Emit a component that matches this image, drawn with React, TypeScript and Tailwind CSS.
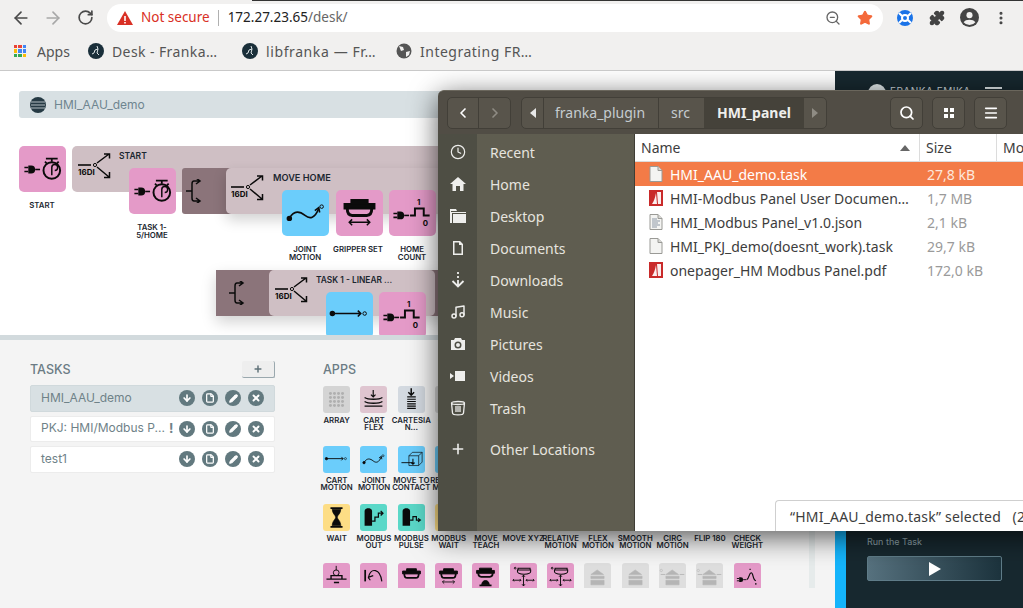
import type { ReactNode } from 'react'
import { ArrowLeft, ArrowRight, RotateCw, ZoomOut, Star, Puzzle, MoreVertical, ArrowDown, Pencil, X, Plus, Search, Menu, ChevronLeft, ChevronRight, Clock, Music, File } from 'lucide-react'

const k = '#0b0b0b'

function Plug({ x = 5, y = 24 }: { x?: number; y?: number }) {
  return (
    <g transform={`translate(${x} ${y})`} stroke={k} fill={k}>
      <path d="M0-2h4M0 2h4" strokeWidth="1.6" />
      <path d="M4-4h3a4 4 0 0 1 0 8H4z" strokeWidth="0" />
      <path d="M11 0h5" strokeWidth="1.6" />
    </g>
  )
}

const Svg = ({ children }: { children: ReactNode }) => (
  <svg viewBox="0 0 47 47" className="w-full h-full" fill="none" stroke={k} strokeWidth="1.6">{children}</svg>
)

const TimerIcon = () => (
  <Svg>
    <Plug />
    <circle cx="33" cy="25" r="8.5" strokeWidth="2" />
    <path d="M33 30v-8a3 3 0 1 1 3 3" strokeWidth="1.5" />
    <path d="M27 13h12M33 13v3M26 16l2 2M40 16l-2 2" strokeWidth="1.8" />
  </Svg>
)
const WaveIcon = () => (
  <Svg>
    <circle cx="7" cy="29" r="2" fill={k} />
    <path d="M7 29c5-9 11-7 16-3s10 3 14-7" />
    <path d="M33 21l4-3 1 5" />
    <circle cx="40" cy="17" r="1.8" strokeWidth="1" />
  </Svg>
)
const GripperIcon = ({ arrows = true }: { arrows?: boolean }) => (
  <Svg>
    <path d="M15 10h17v4H15z" fill={k} />
    <path d="M8 14h31v5H8z" fill={k} />
    <path d="M11 19c0 4 1 7 5 7h15c4 0 5-3 5-7" strokeWidth="3" />
    {arrows && <path d="M13 33h21M16 30l-3 3 3 3M31 30l3 3-3 3" strokeWidth="1.5" />}
  </Svg>
)
const PulseIcon = () => (
  <Svg>
    <Plug x={4} y={26} />
    <path d="M21 26h5v-7h9v7h6" strokeWidth="2" />
    <text x="28" y="15" fontSize="8" fontWeight="700" fill={k} stroke="none" fontFamily="Inter">1</text>
    <text x="34" y="37" fontSize="8" fontWeight="700" fill={k} stroke="none" fontFamily="Inter">0</text>
  </Svg>
)
const LineIcon = () => (
  <Svg>
    <circle cx="6" cy="22" r="2" fill={k} />
    <path d="M6 22h29M32 19l3 3-3 3" />
    <circle cx="39" cy="22" r="1.8" strokeWidth="1" />
  </Svg>
)
const FlexIcon = () => (
  <Svg>
    <path d="M23 7v12M19 15l4 4 4-4" strokeWidth="2" />
    <path d="M8 20c6 4 25 4 31 0M8 27c6 4 25 4 31 0M8 35h31" strokeWidth="2.4" />
  </Svg>
)
const SpringIcon = () => (
  <Svg>
    <path d="M23 4v11M18 11l5 5 5-5" strokeWidth="2.6" />
    <path d="M16 19h15M16 23h15M16 27h15M16 31h15M16 35h15M16 39h15" strokeWidth="2" />
  </Svg>
)
const ContactIcon = () => (
  <Svg>
    <path d="M6 29h21" />
    <path d="M19 17h17v17H19zM19 17l6-6h17v17l-6 6M36 17l6-6" strokeWidth="1.2" />
    <path d="M26 22v10M23 29l3 3 3-3" strokeWidth="1.8" />
  </Svg>
)
const GlassIcon = () => (
  <Svg>
    <path d="M13 7h21M13 40h21" strokeWidth="3" />
    <path d="M16 9c0 8 6 10 6 14s-6 6-6 15h15c0-9-6-11-6-15s6-6 6-14z" fill={k} strokeWidth="1" />
  </Svg>
)
const ModbusIcon = ({ wavy }: { wavy?: boolean }) => (
  <Svg>
    <path d="M8 12c0-6 13-6 13 0v26H8z" fill={k} stroke="none" />
    {wavy ? <path d="M21 28h5v-6h6v6h6M35 25l4 3-4 3" strokeWidth="2" /> : <path d="M21 30h5v-7h6v-7h7M36 12l4 4-4 4" strokeWidth="2.2" />}
  </Svg>
)
const GridIcon = () => (
  <svg viewBox="0 0 47 47" className="w-full h-full" fill="#b0b0b0">
    {[13, 20, 27, 34].flatMap((y) => [13, 20, 27, 34].map((x) => <circle key={`${x}-${y}`} cx={x} cy={y} r="2.6" />))}
  </svg>
)
const BaseIcon = () => (
  <Svg>
    <path d="M23 5v8" />
    <circle cx="23" cy="17" r="5" />
    <path d="M6 28h35M14 22h19v6H14zM19 34h9" strokeWidth="2.4" />
  </Svg>
)
const BounceIcon = () => (
  <Svg>
    <path d="M9 12v20" strokeWidth="3" />
    <path d="M14 25l9-3M14 25l4 5M15 24c4-16 20-15 23 8" strokeWidth="2" />
  </Svg>
)
const TeachIcon = () => (
  <Svg>
    <path d="M13 9h21v4H13zM8 13h31v5H8z" fill={k} />
    <path d="M11 18c0 3 1 6 5 6h15c4 0 5-3 5-6" strokeWidth="3" />
    <path d="M17 38c0-10 13-10 13 0z" fill={k} />
    <path d="M13 39h21" strokeWidth="3" />
  </Svg>
)
const XyzIcon = () => (
  <Svg>
    <circle cx="9" cy="9" r="1.5" />
    <path d="M14 9h21v3H14zM13 12h23v3c0 6-23 6-23 0z" strokeWidth="1.8" />
    <path d="M5 30h14M7 28l-2 2 2 2M17 28l2 2-2 2M28 30h14M40 28l2 2-2 2M30 28l-2 2 2 2M23.500 21v19M21 24l2.500-3 2.500 3M21 37l2.500 3 2.500-3" strokeWidth="1.600" />
  </Svg>
)
const HouseIcon = ({ wide }: { wide?: boolean }) => (
  <svg viewBox="0 0 47 47" className="w-full h-full" fill="#b5b5b5" stroke="#b5b5b5">
    <path d="M23 12l11 8H12z" />
    <path d="M12 23h23v4H12zM12 30h23v8H12z" />
    {wide && <path d="M3 20h8M36 20h8" strokeWidth="1.500" />}
    {wide && <circle cx="4" cy="13" r="2" fill="none" />}
  </svg>
)
const WeightIcon = () => (
  <Svg>
    <Plug x={5} y={29} />
    <path d="M22 29c5-2 4-12 8-12s2 12 8 14" strokeWidth="2" />
    <path d="M28 10v2M38 35v3" strokeWidth="2" />
  </Svg>
)

const Fork = ({ className }: { className: string }) => (
  <svg viewBox="0 0 36 30" className={`absolute w-[36px] h-[30px] ${className}`} fill="none" stroke={k}>
    <path d="M0 13h13" strokeWidth="1.600" />
    <text x="0" y="23" fontSize="8" fontWeight="700" fontFamily="Inter" fill={k} stroke="none">16DI</text>
    <circle cx="17" cy="13" r="1.600" strokeWidth="1" />
    <path d="M19 11L31 2M26 2h5.500v4.500M19 15l12 10M26 25.500h5.500V20" strokeWidth="1.500" />
  </svg>
)
const Bracket = ({ className }: { className: string }) => (
  <svg viewBox="0 0 16 24" className={`absolute w-[16px] h-[24px] ${className}`} fill="none" stroke={k} strokeWidth="1.500">
    <path d="M13 2H8Q6 2 6 5v14q0 3 2 3h5M0 12h6M10-1l4 3-4 3M10 19l4 3-4 3" />
  </svg>
)

const Tile = ({ color, className, children }: { color: string; className: string; children: ReactNode }) => (
  <div className={`absolute w-[47px] h-[46px] rounded-[5px] ${className}`} style={{ background: color }}>{children}</div>
)
const NodeLabel = ({ className, children }: { className: string; children: ReactNode }) => (
  <div className={`absolute w-[60px] text-center text-[7.800px] leading-[8px] font-semibold text-[#1c2730] whitespace-pre ${className}`}>{children}</div>
)

const pink = '#e49ac8'
const blue = '#6bcdfb'
const teal = '#5bd8c8'
const yellow = '#fddd85'
const gray = '#dedede'

const apps: { label: string; color: string; icon?: ReactNode }[] = [
  { label: 'ARRAY', color: '#d4d4d4', icon: <GridIcon /> },
  { label: 'CART\nFLEX', color: '#dfc5d0', icon: <FlexIcon /> },
  { label: 'CARTESIA\nN...', color: '#d3d9e0', icon: <SpringIcon /> },
  { label: 'CART', color: '#d4d4d4' },
  ...Array.from({ length: 8 }, () => ({ label: '', color: 'transparent' })),
  { label: 'CART\nMOTION', color: blue, icon: <LineIcon /> },
  { label: 'JOINT\nMOTION', color: blue, icon: <WaveIcon /> },
  { label: 'MOVE TO\nCONTACT', color: blue, icon: <ContactIcon /> },
  { label: 'RELATIVE\nMOTION', color: blue },
  ...Array.from({ length: 8 }, () => ({ label: '', color: 'transparent' })),
  { label: 'WAIT', color: yellow, icon: <GlassIcon /> },
  { label: 'MODBUS\nOUT', color: teal, icon: <ModbusIcon /> },
  { label: 'MODBUS\nPULSE', color: teal, icon: <ModbusIcon wavy /> },
  { label: 'MODBUS\nWAIT', color: yellow },
  { label: 'MOVE\nTEACH', color: blue },
  { label: 'MOVE XYZ', color: blue },
  { label: 'RELATIVE\nMOTION', color: blue },
  { label: 'FLEX\nMOTION', color: blue },
  { label: 'SMOOTH\nMOTION', color: blue },
  { label: 'CIRC\nMOTION', color: blue },
  { label: 'FLIP 180', color: blue },
  { label: 'CHECK\nWEIGHT', color: blue },
  { label: '', color: pink, icon: <BaseIcon /> },
  { label: '', color: pink, icon: <BounceIcon /> },
  { label: '', color: pink, icon: <GripperIcon arrows={false} /> },
  { label: '', color: pink, icon: <GripperIcon /> },
  { label: '', color: pink, icon: <TeachIcon /> },
  { label: '', color: pink, icon: <XyzIcon /> },
  { label: '', color: pink, icon: <XyzIcon /> },
  { label: '', color: gray, icon: <HouseIcon /> },
  { label: '', color: gray, icon: <HouseIcon /> },
  { label: '', color: gray, icon: <HouseIcon wide /> },
  { label: '', color: gray, icon: <HouseIcon wide /> },
  { label: '', color: pink, icon: <WeightIcon /> },
]

const tasks = [
  { name: 'HMI_AAU_demo', active: true },
  { name: 'PKJ: HMI/Modbus P...', warn: true },
  { name: 'test1' },
]

const sideIcon = 'w-[16px] h-[16px] text-[#eeeeec]'
const places: { name: string; icon: ReactNode }[] = [
  { name: 'Recent', icon: <Clock className={sideIcon} strokeWidth={1.8} /> },
  { name: 'Home', icon: <svg viewBox="0 0 16 16" className={sideIcon} fill="currentColor"><path d="M8 1L0 8h2.500v7H6v-5h4v5h3.500V8H16z" /></svg> },
  { name: 'Desktop', icon: <svg viewBox="0 0 16 16" className={sideIcon} fill="currentColor"><path d="M0 1h6l1 2h-6v1h15v1H2v10H0zM3 6h13v9H3z" /></svg> },
  { name: 'Documents', icon: <svg viewBox="0 0 16 16" className={sideIcon} fill="currentColor"><path d="M3 1h7l3 3v11H3zm1.500 1.500v11h7V5H9V2.500z" /></svg> },
  { name: 'Downloads', icon: <svg viewBox="0 0 16 16" className={sideIcon} fill="none" stroke="currentColor" strokeWidth="1.800"><path d="M8 0v2M8 4v2M8 8v5M2.500 9L8 14.500 13.500 9" /></svg> },
  { name: 'Music', icon: <Music className={sideIcon} strokeWidth={2.2} /> },
  { name: 'Pictures', icon: <svg viewBox="0 0 16 16" className={sideIcon} fill="currentColor"><path d="M5 2h6l1 2h3v10H1V4h3zm3 3.500a3.500 3.500 0 1 0 0 7 3.500 3.500 0 0 0 0-7zM8 7a2 2 0 1 1 0 4 2 2 0 0 1 0-4z" fillRule="evenodd" /></svg> },
  { name: 'Videos', icon: <svg viewBox="0 0 16 16" className={sideIcon} fill="currentColor"><path d="M5 3h10v10H5zM0 5l4 3-4 3z" /></svg> },
  { name: 'Trash', icon: <svg viewBox="0 0 16 16" className={sideIcon} fill="none" stroke="currentColor" strokeWidth="1.300"><path d="M1.500 3c0-2 13-2 13 0s-13 2-13 0zM1.500 3l1 10c0 2.500 11 2.500 11 0l1-10M6 6v6M8 6v6M10 6v6" /></svg> },
]

const PageIcon = ({ lines }: { lines?: boolean }) => (
  <svg viewBox="0 0 14 16" className="w-[14px] h-[16px]">
    <path d="M1 .5h8l4 4v11H1z" fill="#f4f4f2" stroke="#9a9a96" />
    <path d="M9 .5v4h4" fill="#d8d8d4" stroke="#9a9a96" />
    {lines && <path d="M3 5h5M3 7h8M3 9h6M3 11h8M3 13h5" stroke="#8d98a6" />}
  </svg>
)
const PdfIcon = () => (
  <svg viewBox="0 0 14 16" className="w-[14px] h-[16px]">
    <path d="M0 0h14v16H0z" fill="#c92a2a" />
    <path d="M8 2l4 0v12H9zM3 14c2-3 3-6 4-11l1 11z" fill="#fbeeee" />
  </svg>
)

const files = [
  { name: 'HMI_AAU_demo.task', size: '27,8 kB', icon: <PageIcon />, selected: true },
  { name: 'HMI-Modbus Panel User Documen…', size: '1,7 MB', icon: <PdfIcon /> },
  { name: 'HMI_Modbus Panel_v1.0.json', size: '2,1 kB', icon: <PageIcon lines /> },
  { name: 'HMI_PKJ_demo(doesnt_work).task', size: '29,7 kB', icon: <PageIcon /> },
  { name: 'onepager_HM Modbus Panel.pdf', size: '172,0 kB', icon: <PdfIcon /> },
]

const FrankaDot = () => (
  <svg viewBox="0 0 16 16" className="w-[16px] h-[16px] shrink-0">
    <circle cx="8" cy="8" r="8" fill="#1a2f3a" />
    <path d="M9 3l1 3-3 1-1 3M10 6l-1 4 2 2M6 10l-2 1" stroke="#dfe6e8" strokeWidth="1" fill="none" />
  </svg>
)

export default function App() {
  return (
    <div className="relative w-[1023px] h-[608px] overflow-hidden bg-white font-['Noto_Sans',sans-serif]">
      {/* Browser toolbar */}
      <div className="relative h-[35px] bg-[#f1f0ef] flex items-center pl-[5px] text-[#4a4a4a]">
        <div className="absolute top-0 left-[252px] right-0 h-[1px] bg-[#333]" />
        <div className="w-[32px] flex justify-center"><ArrowLeft className="w-[20px] h-[20px]" strokeWidth={2} /></div>
        <div className="w-[32px] flex justify-center"><ArrowRight className="w-[20px] h-[20px] text-[#a8a8a8]" strokeWidth={2} /></div>
        <div className="w-[32px] flex justify-center"><RotateCw className="w-[17px] h-[17px]" strokeWidth={2.4} /></div>
        <div className="ml-[6px] w-[776px] h-[28px] rounded-full bg-white flex items-center pl-[10px] pr-[2px]">
          <svg viewBox="0 0 16 16" className="w-[16px] h-[16px]">
            <path d="M8 1l8 14H0z" fill="#d93025" />
            <path d="M7.200 6h1.600v5H7.200zM7.200 12h1.600v1.500H7.200z" fill="#fff" />
          </svg>
          <span className="ml-[8px] text-[13.500px] text-[#d93025]">Not secure</span>
          <div className="ml-[8px] w-[1px] h-[16px] bg-[#b0b0b0]" />
          <span className="ml-[9px] text-[13.500px] text-[#222]">172.27.23.65<span className="text-[#666]">/desk/</span></span>
          <div className="ml-auto w-[32px] flex justify-center"><ZoomOut className="w-[16px] h-[16px] text-[#666]" /></div>
          <div className="w-[32px] flex justify-center"><Star className="w-[16px] h-[16px] text-[#f4693a]" fill="#f4693a" /></div>
        </div>
        <div className="ml-[6px] w-[32px] flex justify-center">
          <svg viewBox="0 0 16 16" className="w-[16px] h-[16px]">
            <circle cx="8" cy="8" r="8" fill="#1a73e8" />
            <circle cx="8" cy="8" r="3" fill="none" stroke="#fff" strokeWidth="2" />
            <path d="M2 3l3 3M14 3l-3 3M2 13l3-3M14 13l-3-3" stroke="#fff" strokeWidth="2" />
          </svg>
        </div>
        <div className="w-[32px] flex justify-center"><Puzzle className="w-[16px] h-[16px] text-[#444]" fill="#444" /></div>
        <div className="w-[32px] flex justify-center">
          <svg viewBox="0 0 20 20" className="w-[19px] h-[19px]">
            <circle cx="10" cy="10" r="10" fill="#444" />
            <circle cx="10" cy="7.500" r="3.200" fill="#f1f0ef" />
            <path d="M3.800 15c2-3.500 10.400-3.500 12.400 0a8 8 0 0 1-12.400 0z" fill="#f1f0ef" />
          </svg>
        </div>
        <div className="w-[32px] flex justify-center"><MoreVertical className="w-[16px] h-[16px] text-[#444]" strokeWidth={2.6} /></div>
      </div>

      {/* Bookmarks */}
      <div className="h-[36px] bg-[#f1f0ef] border-b border-[#c9c9c9] flex items-center text-[14px] text-[#555] pb-[3px]">
        <div className="w-[88px] pl-[14px] flex items-center gap-[11px]">
          <div className="grid grid-cols-3 gap-[1px] w-[12px] h-[12px]">
            {['#ea4335', '#ea4335', '#4285f4', '#fbbc05', '#4285f4', '#4285f4', '#34a853', '#34a853', '#fbbc05'].map((c, i) => (
              <div key={i} style={{ background: c }} />
            ))}
          </div>
          <span>Apps</span>
        </div>
        <div className="w-[154px] flex items-center gap-[8px]"><FrankaDot /><span className="tracking-[0.4px]">Desk - Franka…</span></div>
        <div className="w-[154px] flex items-center gap-[8px]"><FrankaDot /><span className="tracking-[0.6px]">libfranka — Fr…</span></div>
        <div className="flex items-center gap-[8px]">
          <svg viewBox="0 0 16 16" className="w-[16px] h-[16px]">
            <circle cx="8" cy="8" r="7.500" fill="#555" />
            <path d="M3 3l4 1 1 3-3 1zM10 9l4-1-1 4-3 2z" fill="#f1f0ef" />
          </svg>
          <span className="tracking-[0.5px]">Integrating FR…</span>
        </div>
      </div>

      {/* Desk page */}
      <div className="relative flex h-[537px] overflow-hidden font-['Inter',sans-serif]">
        <div className="w-[835px] flex flex-col">
          {/* Task canvas */}
          <div className="relative h-[264px] bg-white overflow-hidden">
            <div className="absolute left-[19px] top-[20px] w-[800px] h-[27px] rounded-[3px] bg-[#d8e0e3] flex items-center pl-[11px] gap-[8px] text-[12px] text-[#6f8590]">
              <svg viewBox="0 0 16 16" className="w-[16px] h-[16px]">
                <circle cx="8" cy="8" r="8" fill="#263a44" />
                <path d="M1 5h14M1 8h14M1 11h14" stroke="#d8e0e3" strokeWidth="0.800" />
              </svg>
              HMI_AAU_demo
            </div>

            <Tile color={pink} className="left-[19px] top-[75px]"><TimerIcon /></Tile>
            <NodeLabel className="left-[12px] top-[130px]">START</NodeLabel>

            <div className="absolute left-[72px] top-[75px] w-[400px] h-[46px] rounded-l-[5px] bg-[#cfbfc4]" />
            <Fork className="left-[78px] top-[81px]" />
            <div className="absolute left-[119px] top-[79px] text-[8.500px] font-semibold text-[#1c2730]">START</div>

            <Tile color={pink} className="left-[129px] top-[97px]"><TimerIcon /></Tile>
            <NodeLabel className="left-[122px] top-[152px]">{'TASK 1-\n5/HOME'}</NodeLabel>

            <div className="absolute left-[182px] top-[97px] w-[300px] h-[46px] rounded-l-[3px] bg-[#8b747a]" />
            <Bracket className="left-[186px] top-[108px]" />
            <div className="absolute left-[226px] top-[97px] w-[260px] h-[46px] rounded-l-[5px] bg-[#cfbfc4] shadow-[0_6px_14px_rgba(0,0,0,0.18)]" />
            <Fork className="left-[231px] top-[103px]" />
            <div className="absolute left-[273px] top-[100px] text-[9.200px] font-semibold text-[#1c2730]">MOVE HOME</div>

            <Tile color={blue} className="left-[282px] top-[119px]"><WaveIcon /></Tile>
            <Tile color={pink} className="left-[336px] top-[119px]"><GripperIcon /></Tile>
            <Tile color={pink} className="left-[389px] top-[119px]"><PulseIcon /></Tile>
            <NodeLabel className="left-[275px] top-[174px]">{'JOINT\nMOTION'}</NodeLabel>
            <NodeLabel className="left-[328px] top-[174px]">GRIPPER SET</NodeLabel>
            <NodeLabel className="left-[382px] top-[174px]">{'HOME\nCOUNT'}</NodeLabel>

            <div className="absolute left-[216px] top-[199px] w-[270px] h-[46px] bg-[#8b747a] shadow-[0_6px_14px_rgba(0,0,0,0.18)]" />
            <Bracket className="left-[229px] top-[210px]" />
            <div className="absolute left-[269px] top-[199px] w-[166px] h-[46px] rounded-[5px] bg-[#cfbfc4]" />
            <Fork className="left-[275px] top-[205px]" />
            <div className="absolute left-[316px] top-[203px] text-[8.400px] font-semibold text-[#1c2730]">TASK 1 - LINEAR ...</div>
            <Tile color={blue} className="left-[326px] top-[221px]"><LineIcon /></Tile>
            <Tile color={pink} className="left-[379px] top-[221px]"><PulseIcon /></Tile>
          </div>
          <div className="h-[5px] bg-[#d2dadd]" />

          {/* Tasks and apps */}
          <div className="relative flex-1 bg-[#f4f4f4] flex pl-[30px] pt-[21px]">
            <div className="w-[245px]">
              <div className="h-[17px] flex items-center justify-between">
                <span className="text-[12.500px] font-medium text-[#6b7b84] pt-[1px]">TASKS</span>
                <div className="w-[33px] h-[17px] rounded-[2px] bg-[#eeeeee] border-r border-b border-[#9aa8ae] flex items-center justify-center">
                  <Plus className="w-[10px] h-[10px] text-[#5f7178]" strokeWidth={3.500} />
                </div>
              </div>
              <div className="mt-[7px] flex flex-col gap-[4px] text-[12px] text-[#6f8288]">
                {tasks.map((t) => (
                  <div key={t.name} className={`h-[26.500px] rounded-[2px] flex items-center pl-[10px] border ${t.active ? 'bg-[#d8e0e3] border-[#d0d9dc]' : 'bg-white border-[#ececec]'}`}>
                    <span className="-mt-[1px]">{t.name}</span>
                    {t.warn && <span className="absolute left-[169px] text-[13px] font-bold">!</span>}
                    <div className="ml-auto pr-[10px] flex items-center gap-[7px]">
                      {[
                        <ArrowDown key="d" className="w-[10px] h-[10px]" strokeWidth={4} />,
                        <File key="f" className="w-[10px] h-[10px]" strokeWidth={3} />,
                        <Pencil key="p" className="w-[9px] h-[9px]" fill="#fff" strokeWidth={3} />,
                        <X key="x" className="w-[10px] h-[10px]" strokeWidth={4.500} />,
                      ].map((icon) => (
                        <div key={icon.key} className="w-[16px] h-[16px] rounded-full bg-[#62797f] text-white flex items-center justify-center">{icon}</div>
                      ))}
                    </div>
                  </div>
                ))}
              </div>
            </div>

            <div className="ml-[48px] w-[449px]">
              <div className="h-[17px] flex items-center text-[12.500px] font-medium text-[#6b7b84] pt-[1px]">APPS</div>
              <div className="mt-[8px] -ml-[5px] h-[202px] overflow-hidden grid grid-cols-[repeat(12,37.330px)] grid-rows-[60px_58px_59px_59px]">
                {apps.map((a, i) => (
                  <div key={i} className="flex flex-col items-center">
                    <div className="w-[27px] h-[27px] rounded-[3px] shrink-0" style={{ background: a.color }}>{a.icon}</div>
                    <div className="mt-[4px] text-center text-[7.800px] leading-[7px] font-semibold text-[#1c2730] whitespace-pre">{a.label}</div>
                  </div>
                ))}
              </div>
            </div>

            <div className="absolute left-[809px] top-0 w-[6px] h-[248px] bg-[#e6ebeb]" />
          </div>
        </div>

        {/* Right dark panel */}
        <div className="w-[188px] flex flex-col bg-[#17282f]">
          <div className="h-[60px] shrink-0 flex items-start pt-[13px] pl-[33px] gap-[4px] text-[10px] tracking-[0.5px] text-[#cfd8dc]">
            <div className="w-[18px] h-[18px] rounded-full bg-[#dfe6e8]" />
            <span>FRANKA EMIKA</span>
            <div className="ml-auto mr-[21px] w-[17px] h-[2px] bg-[#dfe6e8] mt-[3px]" />
          </div>
          <div className="flex-1 flex">
            <div className="w-[11px] bg-[#14b4fb]" />
            <div className="flex-1 flex flex-col justify-end pb-[27px] pl-[21px]">
              <div className="text-[9px] text-[#8fa3aa] mb-[8px]">Run the Task</div>
              <div className="w-[135px] h-[25px] rounded-[2px] border border-[#5f7c88] bg-gradient-to-r from-[#56717e] to-[#1c333d] flex items-center justify-center">
                <svg viewBox="0 0 12 14" className="w-[12px] h-[14px]"><path d="M0 0l12 7-12 7z" fill="#fff" /></svg>
              </div>
            </div>
          </div>
        </div>

        {/* File manager window */}
        <div className="absolute left-[438px] top-[19px] w-[620px] h-[441px] flex flex-col rounded-t-[6px] shadow-[0_6px_28px_rgba(0,0,0,0.65)] font-['Noto_Sans',sans-serif] text-[14px]">
          <div className="relative h-[44px] shrink-0 rounded-t-[6px] bg-[#514d45] border-t border-[#6a665c] flex items-center pl-[9px] text-[#d9d6ce]">
            <div className="flex h-[32px] rounded-[5px] border border-[#423f38] bg-[#58544b]">
              <div className="w-[31px] flex items-center justify-center border-r border-[#423f38]"><ChevronLeft className="w-[16px] h-[16px] text-white" strokeWidth={2.500} /></div>
              <div className="w-[31px] flex items-center justify-center"><ChevronRight className="w-[16px] h-[16px] text-[#8f8c84]" strokeWidth={2.500} /></div>
            </div>
            <div className="ml-[10px] flex h-[32px] rounded-[5px] border border-[#423f38] bg-[#58544b]">
              <div className="w-[22px] flex items-center justify-center border-r border-[#423f38]">
                <svg viewBox="0 0 6 10" className="w-[6px] h-[10px]"><path d="M6 0v10L0 5z" fill="#e8e8e8" /></svg>
              </div>
              <div className="w-[115px] flex items-center pl-[11px] border-r border-[#423f38] text-[#c5ccd0]">franka_plugin</div>
              <div className="w-[45px] flex items-center pl-[12px] text-[#c5ccd0]">src</div>
              <div className="w-[100px] flex items-center justify-center bg-[#45423a] font-bold text-[#eeeeec]">HMI_panel</div>
              <div className="w-[22px] flex items-center justify-center">
                <svg viewBox="0 0 6 10" className="w-[6px] h-[10px]"><path d="M0 0v10l6-5z" fill="#8f8c84" /></svg>
              </div>
            </div>
            <div className="ml-[63px] flex gap-[9px]">
              <div className="w-[33px] h-[32px] rounded-[5px] border border-[#423f38] bg-[#58544b] flex items-center justify-center"><Search className="w-[16px] h-[16px] text-white" strokeWidth={2.600} /></div>
              <div className="w-[33px] h-[32px] rounded-[5px] border border-[#423f38] bg-[#58544b] grid grid-cols-[4px_4px] gap-[2px] place-content-center">
                {[0, 1, 2, 3].map((i) => <div key={i} className="w-[4px] h-[4px] bg-white" />)}
              </div>
              <div className="w-[33px] h-[32px] rounded-[5px] border border-[#423f38] bg-[#58544b] flex items-center justify-center"><Menu className="w-[16px] h-[16px] text-white" strokeWidth={2.400} /></div>
            </div>
          </div>

          <div className="relative flex-1 flex min-h-0">
            {/* Places */}
            <div className="w-[197px] shrink-0 bg-[#5f5d50] bg-gradient-to-r from-[#4e4e44] from-[39px] to-[#5f5d50] to-[39px] border-r border-[#3f3d35] pt-[2px] text-[#e6e4df]">
              {places.map((p) => (
                <div key={p.name} className="h-[32px] flex items-center">
                  <div className="w-[39px] flex justify-center">{p.icon}</div>
                  <span className="ml-[13px]">{p.name}</span>
                </div>
              ))}
              <div className="mt-[9px] h-[32px] flex items-center">
                <div className="w-[39px] flex justify-center"><Plus className={sideIcon} strokeWidth={2.400} /></div>
                <span className="ml-[13px]">Other Locations</span>
              </div>
            </div>

            {/* File list */}
            <div className="flex-1 bg-white text-[#3d3d3d]">
              <div className="h-[28px] flex items-center border-b border-[#dcdcdc]">
                <div className="w-[285px] h-full flex items-center pl-[6px] border-r border-[#dcdcdc]">
                  Name
                  <svg viewBox="0 0 10 6" className="ml-auto mr-[9px] w-[10px] h-[6px]"><path d="M5 0l5 6H0z" fill="#666" /></svg>
                </div>
                <div className="w-[77px] h-full flex items-center pl-[6px] border-r border-[#dcdcdc]">Size</div>
                <div className="pl-[6px]">Mo</div>
              </div>
              {files.map((f) => (
                <div key={f.name} className={`h-[24px] flex items-center ${f.selected ? 'bg-[#f37b47] text-white' : ''}`}>
                  <div className="ml-[14px] w-[14px] flex justify-center">{f.icon}</div>
                  <span className="ml-[7px] w-[257px] whitespace-nowrap">{f.name}</span>
                  <span className={f.selected ? 'text-[#fde8dd]' : 'text-[#9a9a9a]'}>{f.size}</span>
                </div>
              ))}
            </div>

            {/* Status overlay */}
            <div className="absolute left-[337px] right-0 bottom-0 h-[31px] bg-white border-t border-l border-[#cfcfcf] rounded-tl-[4px] flex items-center pl-[14px] text-[#3d3d3d] whitespace-pre tracking-[0.2px]">
              “HMI_AAU_demo.task” selected   (27,8 kB)
            </div>
          </div>
        </div>
      </div>
    </div>
  )
}
